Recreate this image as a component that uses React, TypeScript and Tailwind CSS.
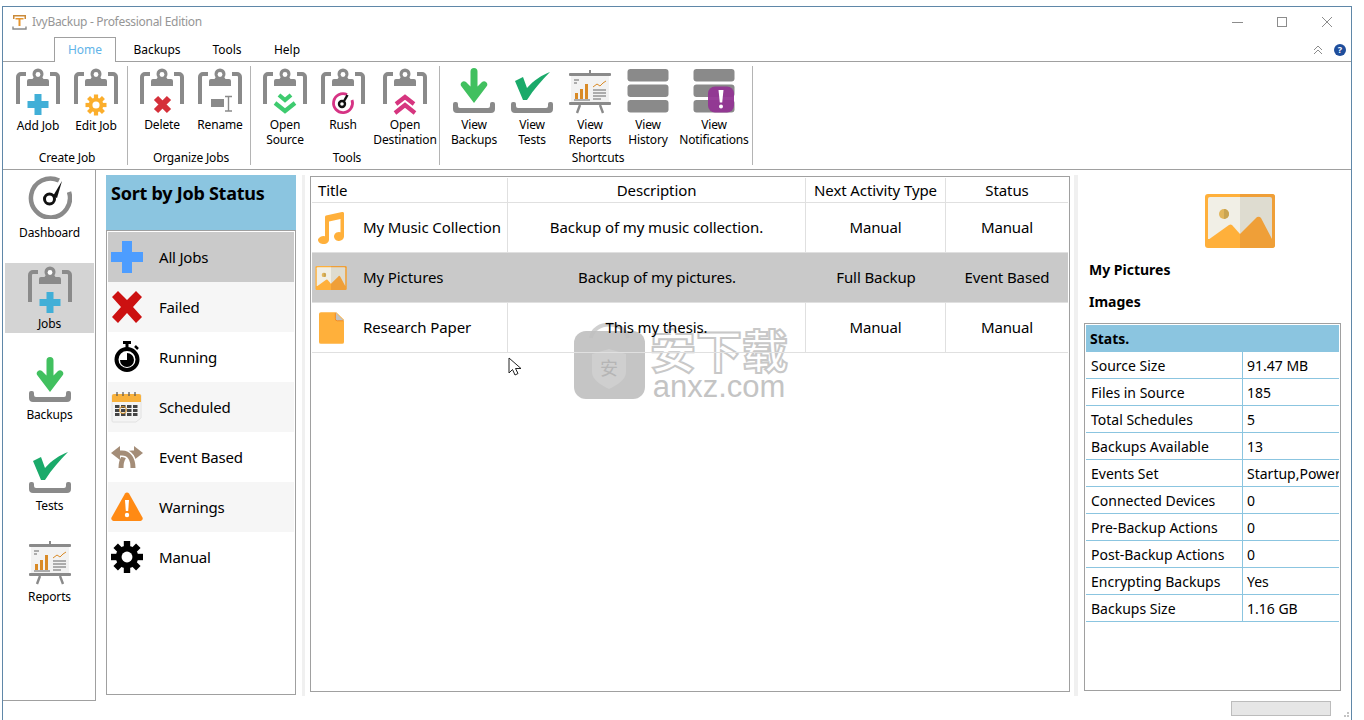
import React from 'react';

// small drawings
const Clip = ({ children }: { children?: React.ReactNode }) => (
  <svg width="48" height="48" viewBox="0 0 48 48" className="block">
    <path d="M4 36V9a3 3 0 0 1 3-3h5" fill="none" stroke="#8a8a8a" strokeWidth="4" />
    <path d="M44 36V9a3 3 0 0 0-3-3h-5" fill="none" stroke="#8a8a8a" strokeWidth="4" />
    <path d="M13 18v-5a2 2 0 0 1 2-2h3.500L24 3l5.500 8H33a2 2 0 0 1 2 2v5z" fill="#8a8a8a" />
    <circle cx="24" cy="6" r="5.500" fill="#8a8a8a" />
    <circle cx="24" cy="6.500" r="2.400" fill="#fff" />
    {children}
  </svg>
);

const PlusMark = () => <path d="M20.500 26h7v7h7v7h-7v7h-7v-7h-7v-7h7z" fill="#41afd7" />;

const GearShape = ({ cx, cy, r, fill, hole }: { cx: number; cy: number; r: number; fill: string; hole: string }) => (
  <g>
    {[0, 45, 90, 135].map((a) => (
      <rect key={a} x={cx - r * 0.2} y={cy - r} width={r * 0.4} height={r * 2} fill={fill} transform={`rotate(${a} ${cx} ${cy})`} />
    ))}
    <circle cx={cx} cy={cy} r={r * 0.7} fill={fill} />
    <circle cx={cx} cy={cy} r={r * 0.34} fill={hole} />
  </g>
);

const AddJobIcon = () => <Clip><PlusMark /></Clip>;
const EditJobIcon = () => <Clip><GearShape cx={24} cy={37} r={10.500} fill="#fbae2c" hole="#fff" /></Clip>;
const DeleteIcon = () => (
  <Clip>
    <path d="M18 30l13 13M31 30L18 43" fill="none" stroke="#d5303a" strokeWidth="6" />
  </Clip>
);
const RenameIcon = () => (
  <Clip>
    <rect x="15" y="31" width="13" height="8" fill="#8a8a8a" />
    <path d="M29 28.500h7M29 43h7M32.500 28.500V43" fill="none" stroke="#8a8a8a" strokeWidth="1.400" />
  </Clip>
);
const OpenSourceIcon = () => (
  <Clip>
    <path d="M18 27l6 5 6-5M14 35l10 8 10-8" fill="none" stroke="#3ecb6f" strokeWidth="4.200" />
  </Clip>
);
const RushIcon = () => (
  <Clip>
    <path d="M28 26.500A9.500 9.500 0 1 0 33 32" fill="none" stroke="#d63384" strokeWidth="2.800" />
    <circle cx="23" cy="36" r="3" fill="none" stroke="#111" strokeWidth="2.400" />
    <path d="M24.500 34l4-7" stroke="#111" strokeWidth="2.400" />
  </Clip>
);
const OpenDestIcon = () => (
  <Clip>
    <path d="M15 36l9-7 9 7M14 45l10-8 10 8" fill="none" stroke="#d6357f" strokeWidth="4.200" />
  </Clip>
);

const Tray = () => (
  <path d="M0 36a2 2 0 0 1 2-2h1a2 2 0 0 1 2 2v2a2 2 0 0 0 2 2h28a2 2 0 0 0 2-2v-2a2 2 0 0 1 2-2h1a2 2 0 0 1 2 2v5a4 4 0 0 1-4 4H4a4 4 0 0 1-4-4z" fill="#8a8a8a" />
);
const BackupIcon = () => (
  <svg width="42" height="46" viewBox="0 0 42 46" className="block">
    <Tray />
    <path d="M17.500 3.500a3.500 3.500 0 0 1 7 0v15l4.500-4.500a3.200 3.200 0 0 1 4.500 4.500L21 35 8.500 18.500a3.200 3.200 0 0 1 4.500-4.500l4.500 4.500z" fill="#41c05f" />
  </svg>
);
const TestIcon = () => (
  <svg width="42" height="46" viewBox="0 0 42 46" className="block">
    <Tray />
    <path d="M4 13l8-4 4 11C23 12 31 7 39 4 31 12 23 21 16 32h-4z" fill="#1aaa6a" />
  </svg>
);
const ReportIcon = () => (
  <svg width="44" height="46" viewBox="0 0 44 46" className="block">
    <rect x="3" y="8" width="38" height="27" fill="#f2f2f2" />
    <rect x="21" y="2" width="2" height="5" fill="#8a8a8a" />
    <rect x="1" y="5" width="42" height="3" rx="1" fill="#8a8a8a" />
    <rect x="1" y="34" width="42" height="3" rx="1" fill="#8a8a8a" />
    <path d="M12 37l-3 8M32 37l3 8" stroke="#8a8a8a" strokeWidth="2.400" />
    <path d="M6 12h5M6 15h3" stroke="#666" strokeWidth="1" />
    <rect x="7" y="25" width="3" height="6" fill="#d98a26" />
    <rect x="12" y="21" width="3" height="10" fill="#d98a26" />
    <rect x="17" y="16" width="3" height="15" fill="#d98a26" />
    <path d="M6 32h16M25 22h13M25 25h13M25 28h13M25 31h8" stroke="#666" strokeWidth="1" />
    <path d="M25 19l4-3 3 2 3-3 3-2" fill="none" stroke="#d98a26" strokeWidth="1" />
  </svg>
);
const HistoryIcon = ({ alert }: { alert?: boolean }) => (
  <svg width="42" height="46" viewBox="0 0 42 46" className="block">
    <rect x="0.500" y="1" width="41" height="12.500" rx="3" fill="#8a8a8a" />
    <rect x="0.500" y="16.500" width="41" height="12.500" rx="3" fill="#8a8a8a" />
    <rect x="0.500" y="32" width="41" height="12.500" rx="3" fill="#8a8a8a" />
    {alert && (
      <g>
        <rect x="15" y="18.500" width="26" height="26" rx="7" fill="#923593" fillOpacity="0.95" />
        <path d="M25.500 22h5l-1.300 12.500h-2.400z" fill="#fff" />
        <circle cx="28" cy="38.500" r="2" fill="#fff" />
      </g>
    )}
  </svg>
);
const DashIcon = ({ size = 44 }: { size?: number }) => (
  <svg width={size} height={size} viewBox="0 0 44 44" className="block">
    <path d="M31 5.500A19.500 19.500 0 1 0 41 17" fill="none" stroke="#8a8a8a" strokeWidth="4.500" />
    <circle cx="21.500" cy="24" r="5" fill="none" stroke="#111" strokeWidth="3" />
    <path d="M25 21l9-15-5 17z" fill="#111" />
  </svg>
);

const ImageIcon = ({ w, h }: { w: number; h: number }) => (
  <svg width={w} height={h} viewBox="0 0 70 54" className="block">
    <rect x="0" y="0" width="70" height="54" rx="3" fill="#ffb03b" />
    <path d="M35 0h32a3 3 0 0 1 3 3v48a3 3 0 0 1-3 3H35z" fill="#ef9f38" />
    <path d="M3 5a2 2 0 0 1 2-2h30v42H3z" fill="#f1efe6" />
    <path d="M35 3h30a2 2 0 0 1 2 2v40H35z" fill="#dedcd0" />
    <path d="M3 46l21-15a3 3 0 0 1 3 0l8 9v14H3z" fill="#ffb03b" />
    <path d="M35 40l16-16a3 3 0 0 1 5 0l11 21v9H35z" fill="#ef9f38" />
    <circle cx="19" cy="20" r="5" fill="#e2b65c" />
    <path d="M19 15a5 5 0 0 1 0 10z" fill="#c9a452" />
  </svg>
);
const MusicIcon = () => (
  <svg width="26" height="32" viewBox="0 0 26 32" className="block">
    <path d="M8 3.500L24 0a1.500 1.500 0 0 1 2 1.500v23a5 4.500 0 1 1-3.500-4.300V7L11 9.500V28a5.500 4 0 1 1-4-3.800V5a2 2 0 0 1 1-1.500z" fill="#ffb03b" />
  </svg>
);
const PaperIcon = () => (
  <svg width="25" height="32" viewBox="0 0 26 33" className="block">
    <path d="M2 0h16l8 8v23a2 2 0 0 1-2 2H2a2 2 0 0 1-2-2V2a2 2 0 0 1 2-2z" fill="#ffb03b" />
    <path d="M17 0l9 9h-7a2 2 0 0 1-2-2z" fill="#c2c2c2" />
    <path d="M17 1v6a2 2 0 0 0 2 2h6" fill="none" stroke="#f58a1f" strokeWidth="1" />
  </svg>
);

const BluePlus = () => (
  <svg width="32" height="32" viewBox="0 0 32 32" className="block">
    <path d="M11 0h10v11h11v10H21v11H11V21H0V11h11z" fill="#4d9dff" />
  </svg>
);
const RedCross = () => (
  <svg width="32" height="32" viewBox="0 0 32 32" className="block">
    <path d="M7 0l9 9 9-9 6 6-9 10 9 10-6 6-9-10-9 10-6-6 9-10L1 6z" fill="#cc1111" />
  </svg>
);
const Stopwatch = () => (
  <svg width="32" height="32" viewBox="0 0 32 32" className="block">
    <rect x="12" y="0" width="8" height="3" fill="#000" />
    <rect x="14.500" y="2" width="3" height="5" fill="#000" />
    <path d="M24 5l3 3" stroke="#000" strokeWidth="2.500" />
    <circle cx="16" cy="18.500" r="10.500" fill="none" stroke="#000" strokeWidth="4" />
    <path d="M16 12v7H9a7 7 0 0 0 7 7 7 7 0 0 0 0-14z" fill="#000" />
  </svg>
);
const Calendar = () => (
  <svg width="32" height="32" viewBox="0 0 32 32" className="block">
    <path d="M1 4h29v23l-5 4H2a1 1 0 0 1-1-1z" fill="#f4f4f4" stroke="#ddd" strokeWidth="0.800" />
    <path d="M1 11V5a2 2 0 0 1 2-2h25a2 2 0 0 1 2 2v6z" fill="#f8b13c" />
    <path d="M6 1v4M12 1v4M18 1v4M24 1v4" stroke="#555" strokeWidth="1.200" />
    {[14, 18, 22].map((y) => [4, 10, 16, 22].map((x) => <rect key={`${x}-${y}`} x={x} y={y} width="4.500" height="3" fill="#444" />))}
    <circle cx="12" cy="19" r="3.500" fill="none" stroke="#e09a2e" strokeWidth="1" />
  </svg>
);
const EventArrows = () => (
  <svg width="32" height="32" viewBox="0 0 32 32" className="block">
    <path d="M24 12h-3C14 12 10 18 10 27" fill="none" stroke="#a48d78" strokeWidth="5" />
    <path d="M32 12l-9-7v14z" fill="#a48d78" />
    <path d="M7 12h4c7 0 11 6 11 15" fill="none" stroke="#fff" strokeWidth="8" />
    <path d="M7 12h4c7 0 11 6 11 15" fill="none" stroke="#a48d78" strokeWidth="5" />
    <path d="M0 12l9-7v14z" fill="#a48d78" />
  </svg>
);
const WarnIcon = () => (
  <svg width="32" height="30" viewBox="0 0 32 30" className="block">
    <path d="M14 1.500a2.500 2.500 0 0 1 4 0l13.500 24a2.500 2.500 0 0 1-2 3.500H2.500a2.500 2.500 0 0 1-2-3.500z" fill="#ff8a14" />
    <path d="M14 8h4l-.8 11h-2.400z" fill="#fff" />
    <circle cx="16" cy="23" r="2.200" fill="#fff" />
  </svg>
);
const BlackGear = () => (
  <svg width="32" height="32" viewBox="0 0 32 32" className="block">
    <GearShape cx={16} cy={16} r={16} fill="#000" hole="#fff" />
  </svg>
);

const ribbonGroups = [
  {
    title: 'Create Job',
    items: [
      { lines: ['Add Job'], icon: <AddJobIcon />, nudge: true },
      { lines: ['Edit Job'], icon: <EditJobIcon />, nudge: true },
    ],
  },
  {
    title: 'Organize Jobs',
    items: [
      { lines: ['Delete'], icon: <DeleteIcon /> },
      { lines: ['Rename'], icon: <RenameIcon /> },
    ],
  },
  {
    title: 'Tools',
    items: [
      { lines: ['Open', 'Source'], icon: <OpenSourceIcon /> },
      { lines: ['Rush'], icon: <RushIcon /> },
      { lines: ['Open', 'Destination'], icon: <OpenDestIcon /> },
    ],
  },
  {
    title: 'Shortcuts',
    items: [
      { lines: ['View', 'Backups'], icon: <BackupIcon /> },
      { lines: ['View', 'Tests'], icon: <TestIcon /> },
      { lines: ['View', 'Reports'], icon: <ReportIcon /> },
      { lines: ['View', 'History'], icon: <HistoryIcon /> },
      { lines: ['View', 'Notifications'], icon: <HistoryIcon alert />, wide: true },
    ],
  },
];

const navItems = [
  { label: 'Dashboard', icon: <DashIcon /> },
  { label: 'Jobs', icon: <AddJobIcon />, active: true },
  { label: 'Backups', icon: <BackupIcon /> },
  { label: 'Tests', icon: <TestIcon /> },
  { label: 'Reports', icon: <ReportIcon /> },
];

const statusItems = [
  { label: 'All Jobs', icon: <BluePlus />, bg: 'bg-[#cacaca]' },
  { label: 'Failed', icon: <RedCross />, bg: 'bg-[#f6f6f6]' },
  { label: 'Running', icon: <Stopwatch />, bg: 'bg-white' },
  { label: 'Scheduled', icon: <Calendar />, bg: 'bg-[#f6f6f6]' },
  { label: 'Event Based', icon: <EventArrows />, bg: 'bg-white' },
  { label: 'Warnings', icon: <WarnIcon />, bg: 'bg-[#f6f6f6]' },
  { label: 'Manual', icon: <BlackGear />, bg: 'bg-white' },
];

const jobs = [
  { title: 'My Music Collection', desc: 'Backup of my music collection.', next: 'Manual', status: 'Manual', icon: <MusicIcon /> },
  { title: 'My Pictures', desc: 'Backup of my pictures.', next: 'Full Backup', status: 'Event Based', icon: <ImageIcon w={32} h={24} />, selected: true },
  { title: 'Research Paper', desc: 'This my thesis.', next: 'Manual', status: 'Manual', icon: <PaperIcon /> },
];

const stats = [
  ['Source Size', '91.47 MB'],
  ['Files in Source', '185'],
  ['Total Schedules', '5'],
  ['Backups Available', '13'],
  ['Events Set', 'Startup,Power'],
  ['Connected Devices', '0'],
  ['Pre-Backup Actions', '0'],
  ['Post-Backup Actions', '0'],
  ['Encrypting Backups', 'Yes'],
  ['Backups Size', '1.16 GB'],
];

const App: React.FC = () => {
  return (
    <div className="relative h-[720px] w-[1364px] overflow-hidden bg-white pl-[2px] pt-[6px] font-['Noto_Sans',sans-serif] text-black">
      {/* watermark, sits under the window content */}
      <div className="pointer-events-none absolute left-[574px] top-[318px] flex items-start">
        <svg width="71" height="81" viewBox="0 0 71 81" className="block">
          <path d="M17 20C20 2 50 2 54 20" fill="none" stroke="#c4c4c4" strokeWidth="4" opacity="0.8" />
          <rect x="0" y="13" width="71" height="68" rx="12" fill="#bfbfbf" fillOpacity="0.9" />
          <path d="M35 31l17 5v18c0 8-9 13-17 17-8-4-17-9-17-17V36z" fill="#cfcfcf" />
          <text x="35" y="57" textAnchor="middle" fontSize="18" fill="#b5b5b5" fontFamily="'Noto Sans CJK SC',sans-serif">安</text>
        </svg>
        <div className="ml-[5px] mt-[3px] flex flex-col items-center">
          <div className="text-[46px] font-bold leading-[55px] text-white/70 [-webkit-text-stroke:2px_#c8c8c8] font-['Noto_Sans_CJK_SC',sans-serif]">安下载</div>
          <div className="-mt-[4px] text-[31px] leading-[30px] text-[#c4c4c4] font-['Liberation_Sans',sans-serif]">anxz.com</div>
        </div>
      </div>

      <div className="relative z-10 flex h-[714px] w-[1350px] flex-col border-l border-r border-t border-[#5f87a8]">
        {/* title bar */}
        <div className="flex h-[30px] shrink-0 items-center">
          <svg width="15" height="16" viewBox="0 0 15 16" className="ml-[9px] block">
            <path d="M1 1h13v4h-1.500V2.500h-10V5H1z" fill="#c98a3a" />
            <path d="M3.500 4h8v1.500h-3V12h-2V5.500h-3z" fill="#e8962e" />
            <path d="M1 12.500v2.500h13v-2.500" fill="none" stroke="#8a8a8a" strokeWidth="1.400" />
          </svg>
          <span className="ml-[5px] text-[12px] tracking-[-0.3px] text-[#969696]">IvyBackup - Professional Edition</span>
          <div className="ml-auto flex h-full items-center">
            <span className="mr-[34px] block h-px w-[11px] bg-[#8c8c8c]" />
            <span className="mr-[34px] block h-[10px] w-[10px] border border-[#8c8c8c]" />
            <svg width="12" height="12" viewBox="0 0 12 12" className="mr-[18px] block">
              <path d="M1 1l10 10M11 1L1 11" stroke="#8c8c8c" strokeWidth="1" />
            </svg>
          </div>
        </div>

        {/* tabs */}
        <div className="flex h-[25px] shrink-0 items-end border-b border-[#a0a0a0]">
          <div className="relative top-px ml-[51px] flex h-[25px] w-[62px] items-center justify-center border-l border-r border-t border-[#a0a0a0] bg-white text-[12px] text-[#62b4e8]">Home</div>
          <div className="flex h-[24px] w-[82px] items-center justify-center pt-px text-[12px]">Backups</div>
          <div className="flex h-[24px] w-[58px] items-center justify-center pt-px text-[12px]">Tools</div>
          <div className="flex h-[24px] w-[62px] items-center justify-center pt-px text-[12px]">Help</div>
          <div className="ml-auto mr-[5px] flex h-[24px] items-center gap-[11px] pt-px">
            <svg width="10" height="10" viewBox="0 0 10 10" className="block">
              <path d="M1 5l4-4 4 4M1 9l4-4 4 4" fill="none" stroke="#8c8c8c" strokeWidth="1" />
            </svg>
            <span className="flex h-[12px] w-[12px] items-center justify-center rounded-full bg-[#1f4e9c] text-[9px] font-bold leading-none text-white">?</span>
          </div>
        </div>

        {/* ribbon */}
        <div className="flex h-[108px] shrink-0 border-b border-[#a0a0a0] pl-[2px]">
          {ribbonGroups.map((group, i) => (
            <div key={group.title} className={`my-[4px] flex flex-col border-r border-[#b4b4b4] ${i === 0 ? 'pl-[4px] pr-[2px]' : 'pl-[5px] pr-px'}`}>
              <div className="flex h-[86px]">
                {group.items.map((item: any) => (
                  <div key={item.lines.join(' ')} className={`flex flex-col items-center pt-[2px] ${item.wide ? 'w-[74px]' : group.title === 'Tools' && item.lines[1] === 'Destination' ? 'w-[66px]' : 'w-[58px]'}`}>
                    <div className="flex h-[48px] items-start justify-center">{item.icon}</div>
                    <div className={`text-center text-[12px] leading-[15px] tracking-[-0.15px] ${item.nudge ? 'mt-[2px]' : 'mt-px'}`}>
                      {item.lines.map((line: string) => (
                        <div key={line}>{line}</div>
                      ))}
                    </div>
                  </div>
                ))}
              </div>
              <div className="text-center text-[12px] leading-[15px] tracking-[-0.15px]">{group.title}</div>
            </div>
          ))}
        </div>

        {/* main area */}
        <div className="flex min-h-0 flex-1">
          {/* left nav */}
          <div className="flex h-[531px] w-[93px] shrink-0 flex-col gap-[21px] border-b border-r border-[#a0a0a0] pl-[2px] pt-[2px]">
            {navItems.map((nav) => (
              <div key={nav.label} className={`flex h-[70px] w-[89px] flex-col items-center ${nav.active ? 'bg-[#d4d4d4]' : ''}`}>
                <div className="flex h-[53px] items-start justify-center pt-[3px]">{nav.icon}</div>
                <div className="text-[12px] leading-[15px] tracking-[-0.15px]">{nav.label}</div>
              </div>
            ))}
          </div>

          {/* status list */}
          <div className="ml-[10px] mt-[5px] flex h-[520px] w-[190px] shrink-0 flex-col border-b border-l border-r border-[#a0a0a0] bg-white">
            <div className="-mx-px h-[56px] shrink-0 border-b border-[#a0a0a0] bg-[#8bc5e0] pl-[5px] pt-[4px] text-[18px] font-bold leading-[28px] tracking-[-0.25px]">Sort by Job Status</div>
            <div className="p-px">
              {statusItems.map((s) => (
                <div key={s.label} className={`flex h-[50px] items-center ${s.bg}`}>
                  <div className="ml-[3px] flex w-[32px] justify-center">{s.icon}</div>
                  <span className="ml-[16px] text-[15px] tracking-[-0.2px]">{s.label}</span>
                </div>
              ))}
            </div>
          </div>

          {/* splitter */}
          <div className="ml-[6px] mt-[5px] h-[521px] w-[3px] shrink-0 bg-[#f0f0f0]" />

          {/* job grid */}
          <div className="ml-[5px] mt-[6px] flex h-[516px] w-[760px] shrink-0 flex-col border border-[#a0a0a0] p-px">
            <div className="flex h-[25px] shrink-0 border-b border-[#e0e0e0] text-[15px] tracking-[-0.1px]">
              <div className="w-[196px] border-r border-[#e0e0e0] pl-[6px] leading-[25px]">Title</div>
              <div className="w-[298px] border-r border-[#e0e0e0] text-center leading-[25px]">Description</div>
              <div className="w-[140px] border-r border-[#e0e0e0] text-center leading-[25px]">Next Activity Type</div>
              <div className="flex-1 text-center leading-[25px]">Status</div>
            </div>
            {jobs.map((job) => (
              <div key={job.title} className={`flex h-[50px] shrink-0 border-b border-[#e0e0e0] text-[15px] tracking-[-0.1px] ${job.selected ? 'bg-[#c9c9c9]' : ''}`}>
                <div className={`flex w-[196px] items-center ${job.selected ? '' : 'border-r border-[#e0e0e0]'}`}>
                  <div className="flex w-[38px] justify-center">{job.icon}</div>
                  <span className="ml-[13px]">{job.title}</span>
                </div>
                <div className={`flex w-[298px] items-center justify-center ${job.selected ? '' : 'border-r border-[#e0e0e0]'}`}>{job.desc}</div>
                <div className={`flex w-[140px] items-center justify-center ${job.selected ? '' : 'border-r border-[#e0e0e0]'}`}>{job.next}</div>
                <div className="flex flex-1 items-center justify-center">{job.status}</div>
              </div>
            ))}
          </div>

          {/* splitter */}
          <div className="ml-[4px] mt-[5px] h-[521px] w-[4px] shrink-0 bg-[#f0f0f0]" />

          {/* details */}
          <div className="ml-[6px] flex w-[257px] shrink-0 flex-col pt-[24px]">
            <div className="pl-[121px]">
              <ImageIcon w={70} h={54} />
            </div>
            <div className="ml-[5px] mt-[11px] text-[14px] font-bold leading-[22px]">My Pictures</div>
            <div className="ml-[5px] mt-[10px] text-[14px] font-bold leading-[22px]">Images</div>
            <div className="mt-[10px] h-[368px] border border-[#a0a0a0] p-px">
              <div className="h-[27px] bg-[#8bc5e0] pl-[4px] text-[14px] font-bold leading-[27px]">Stats.</div>
              {stats.map(([k, v]) => (
                <div key={k} className="flex h-[27px] border-b border-[#8bc5e0] text-[14px] leading-[28px]">
                  <div className="w-[157px] shrink-0 border-r border-[#8bc5e0] pl-[5px]">{k}</div>
                  <div className="overflow-hidden whitespace-nowrap pl-[4px]">{v}</div>
                </div>
              ))}
            </div>
          </div>
        </div>
      </div>

      {/* status bar progress */}
      <div className="absolute left-[1231px] top-[701px] z-10 h-[15px] w-[100px] border border-[#bcbcbc] bg-[#e6e6e6]" />

      {/* resize grip */}
      <svg width="8" height="8" viewBox="0 0 8 8" className="absolute left-[1342px] top-[711px] z-10">
        <path d="M5 1h2v2H5zM2 4h2v2H2zM5 4h2v2H5z" fill="#c4c4c4" />
      </svg>

      {/* cursor */}
      <svg width="14" height="20" viewBox="0 0 14 20" className="absolute left-[508px] top-[357px] z-20">
        <path d="M1 1v15l3.500-3.500L7 18l3-1.500-2.500-5H13z" fill="#fff" stroke="#222" strokeWidth="1" />
      </svg>
    </div>
  );
};

export default App;
